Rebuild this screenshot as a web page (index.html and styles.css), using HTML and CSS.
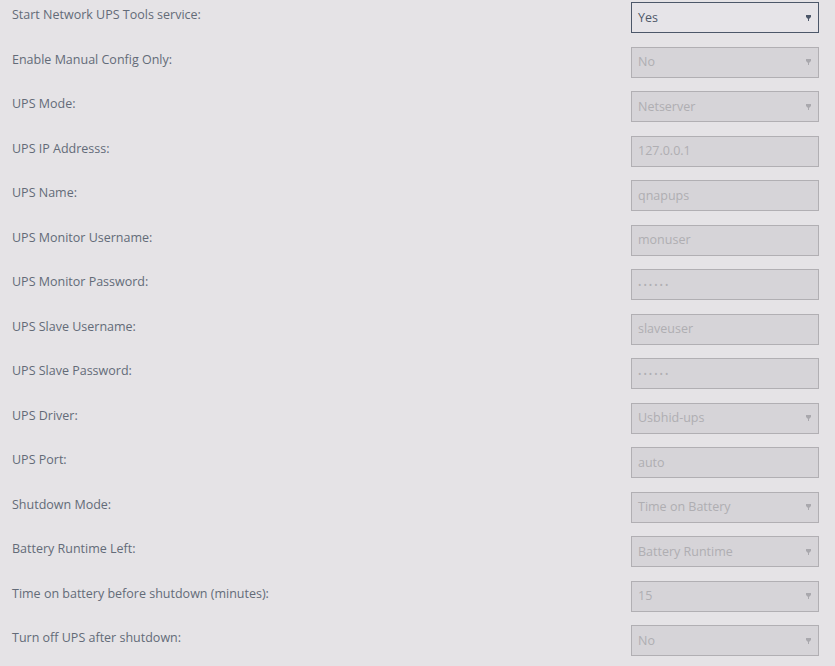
FILE: index.html
```html
<!DOCTYPE html>
<html lang="en">
<head>
	<meta charset="UTF-8">
	<title>Network UPS Tools</title>
	<link rel="stylesheet" href="styles.css">
</head>
<body>
	<div class="form">
		<div class="row">
			<label>Start Network UPS Tools service:</label>
			<div class="field select active"><span>Yes</span><svg class="arrow" width="5" height="6" viewBox="0 0 5 6"><polygon points="0,0 5,0 5,2 3,4 3,6 2,6 2,4 0,2"/></svg></div>
		</div>
		<div class="row">
			<label>Enable Manual Config Only:</label>
			<div class="field select"><span>No</span><svg class="arrow" width="5" height="6" viewBox="0 0 5 6"><polygon points="0,0 5,0 5,2 3,4 3,6 2,6 2,4 0,2"/></svg></div>
		</div>
		<div class="row">
			<label>UPS Mode:</label>
			<div class="field select"><span>Netserver</span><svg class="arrow" width="5" height="6" viewBox="0 0 5 6"><polygon points="0,0 5,0 5,2 3,4 3,6 2,6 2,4 0,2"/></svg></div>
		</div>
		<div class="row">
			<label>UPS IP Addresss:</label>
			<div class="field"><span>127.0.0.1</span></div>
		</div>
		<div class="row">
			<label>UPS Name:</label>
			<div class="field"><span>qnapups</span></div>
		</div>
		<div class="row">
			<label>UPS Monitor Username:</label>
			<div class="field"><span>monuser</span></div>
		</div>
		<div class="row">
			<label>UPS Monitor Password:</label>
			<div class="field"><span class="dots">••••••</span></div>
		</div>
		<div class="row">
			<label>UPS Slave Username:</label>
			<div class="field"><span>slaveuser</span></div>
		</div>
		<div class="row">
			<label>UPS Slave Password:</label>
			<div class="field"><span class="dots">••••••</span></div>
		</div>
		<div class="row">
			<label>UPS Driver:</label>
			<div class="field select"><span>Usbhid-ups</span><svg class="arrow" width="5" height="6" viewBox="0 0 5 6"><polygon points="0,0 5,0 5,2 3,4 3,6 2,6 2,4 0,2"/></svg></div>
		</div>
		<div class="row">
			<label>UPS Port:</label>
			<div class="field"><span>auto</span></div>
		</div>
		<div class="row">
			<label>Shutdown Mode:</label>
			<div class="field select"><span>Time on Battery</span><svg class="arrow" width="5" height="6" viewBox="0 0 5 6"><polygon points="0,0 5,0 5,2 3,4 3,6 2,6 2,4 0,2"/></svg></div>
		</div>
		<div class="row">
			<label>Battery Runtime Left:</label>
			<div class="field select"><span>Battery Runtime</span><svg class="arrow" width="5" height="6" viewBox="0 0 5 6"><polygon points="0,0 5,0 5,2 3,4 3,6 2,6 2,4 0,2"/></svg></div>
		</div>
		<div class="row">
			<label>Time on battery before shutdown (minutes):</label>
			<div class="field select"><span>15</span><svg class="arrow" width="5" height="6" viewBox="0 0 5 6"><polygon points="0,0 5,0 5,2 3,4 3,6 2,6 2,4 0,2"/></svg></div>
		</div>
		<div class="row">
			<label>Turn off UPS after shutdown:</label>
			<div class="field select"><span>No</span><svg class="arrow" width="5" height="6" viewBox="0 0 5 6"><polygon points="0,0 5,0 5,2 3,4 3,6 2,6 2,4 0,2"/></svg></div>
		</div>
	</div>
</body>
</html>
```

FILE: styles.css
```css
*{
	margin:0;
	padding:0;
	box-sizing: border-box;
}
html,body{ height: 100%; }
body{
	background: #e5e3e6;
	font-family: 'Open Sans', 'Liberation Sans', sans-serif;
	font-size: 12.5px;
	overflow: hidden;
}
.form{
	padding: 2px 16px 0 12px;
}
.row{
	display: flex;
	justify-content: space-between;
	align-items: flex-start;
	height: 44.5px;
}
.row label{
	color: #636b78;
	line-height: 16px;
	margin-top: 5px;
}
.field{
	width: 188px;
	height: 31px;
	display: flex;
	align-items: center;
	justify-content: space-between;
	padding: 0 6px;
	background: #d6d4d8;
	border: 1px solid #b1afb3;
	color: #afaeb2;
}
.field span{
	line-height: 16px;
}
.field .dots{
	font-size: 9px;
	letter-spacing: 2px;
}
.arrow{
	fill: #a9a8ad;
	margin-right: 1px;
}
.field.active{
	background: #e6e4e8;
	border-color: #4c5769;
	color: #4f5868;
}
.field.active .arrow{
	fill: #4c5769;
}
```
